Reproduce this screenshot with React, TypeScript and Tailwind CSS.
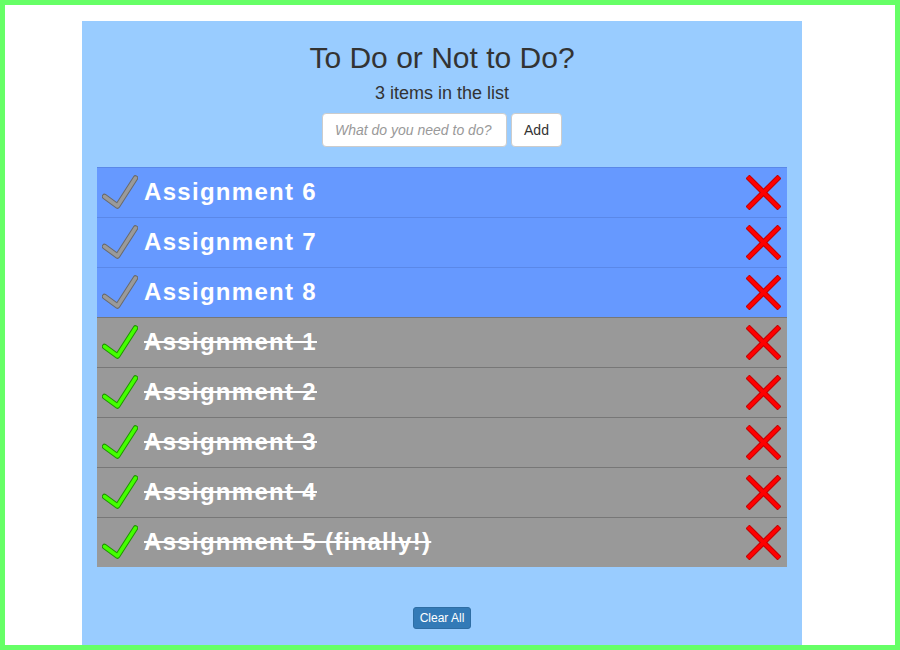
import React from "react";

const items = [
  { text: "Assignment 6", done: false },
  { text: "Assignment 7", done: false },
  { text: "Assignment 8", done: false },
  { text: "Assignment 1", done: true },
  { text: "Assignment 2", done: true },
  { text: "Assignment 3", done: true },
  { text: "Assignment 4", done: true },
  { text: "Assignment 5 (finally!)", done: true },
];

function Check({ done }: { done: boolean }) {
  const outline = done ? "#1f9400" : "#6a6a6a";
  const fill = done ? "#44ff00" : "#9a9a9a";
  return (
    <svg width="36" height="36" viewBox="0 0 36 36" className="shrink-0">
      <polyline
        points="2.5,21.5 15.5,31 33.5,3"
        fill="none"
        stroke={outline}
        strokeWidth="5.5"
        strokeLinejoin="round"
        strokeLinecap="round"
      />
      <polyline
        points="2.5,21.5 15.5,31 33.5,3"
        fill="none"
        stroke={fill}
        strokeWidth="3.5"
        strokeLinejoin="round"
        strokeLinecap="round"
      />
    </svg>
  );
}

function Cross() {
  return (
    <svg width="35" height="35" viewBox="0 0 35 35" className="shrink-0">
      <g stroke="#c40000" strokeWidth="5.5" strokeLinecap="butt">
        <line x1="1.5" y1="1.5" x2="33.5" y2="33.5" />
        <line x1="33.5" y1="1.5" x2="1.5" y2="33.5" />
      </g>
      <g stroke="#ff0000" strokeWidth="3.5" strokeLinecap="butt">
        <line x1="2" y1="2" x2="33" y2="33" />
        <line x1="33" y1="2" x2="2" y2="33" />
      </g>
    </svg>
  );
}

export default function App() {
  return (
    <div
      className="w-[900px] h-[650px] border-[5px] border-[#66ff66] bg-white flex flex-col overflow-hidden"
      style={{ fontFamily: '"Liberation Sans", Arial, sans-serif' }}
    >
      <div className="ml-[77px] mt-[16px] w-[720px] flex-1 bg-[#99ccff] px-[15px] pt-[20px] flex flex-col">
        <h1 className="text-[30px] leading-[33px] text-[#333] text-center font-normal m-0">
          To Do or Not to Do?
        </h1>
        <p className="mt-[9px] text-[18px] leading-[20px] text-[#333] text-center">
          3 items in the list
        </p>
        <div className="mt-[10px] flex justify-center gap-[4px]">
          <input
            className="w-[185px] h-[34px] bg-white border border-[#ccc] rounded-[4px] px-[12px] text-[14px] text-[#555] placeholder:italic placeholder:text-[#999] outline-none"
            placeholder="What do you need to do?"
          />
          <button className="w-[51px] h-[34px] bg-white border border-[#ccc] rounded-[4px] text-[14px] text-[#333]">
            Add
          </button>
        </div>
        <div className="mt-[20px] flex flex-col">
          {items.map((it, i) => (
            <div
              key={i}
              className={
                it.done
                  ? "h-[50px] flex items-center border-t border-[#777] bg-[#999999] pl-[5px] pr-[6px]"
                  : "h-[50px] flex items-center border-t border-[#5a88e8] bg-[#6699ff] pl-[5px] pr-[6px]"
              }
            >
              <Check done={it.done} />
              <span
                className={
                  it.done
                    ? "ml-[6px] mb-[2px] flex-1 text-[24px] leading-[28px] font-bold text-white tracking-[1.3px] line-through"
                    : "ml-[6px] mb-[2px] flex-1 text-[24px] leading-[28px] font-bold text-white tracking-[1.3px]"
                }
              >
                {it.text}
              </span>
              <Cross />
            </div>
          ))}
        </div>
        <div className="mt-[40px] flex justify-center">
          <button className="w-[58px] h-[22px] bg-[#337ab7] border border-[#2e6da4] rounded-[3px] text-[12px] text-white leading-[20px]">
            Clear All
          </button>
        </div>
      </div>
    </div>
  );
}
